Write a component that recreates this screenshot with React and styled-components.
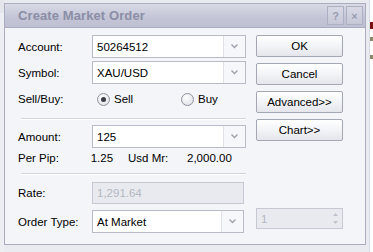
import React from "react";
import styled, { createGlobalStyle } from "styled-components";

const Global = createGlobalStyle`
  html, body {
    margin: 0;
    padding: 0;
    background: #e9ebf0;
    font-family: "Liberation Sans", Arial, sans-serif;
    font-size: 11.5px;
    color: #000;
  }
`;

const Page = styled.div`
  display: flex;
  width: 373px;
  height: 252px;
  overflow: hidden;
`;

const LeftEdge = styled.div`
  width: 4px;
  background: #eceef2;
  border-top: 13px solid #e4e6ec;
`;

const Dialog = styled.div`
  margin-top: 3px;
  width: 360px;
  height: 240px;
  border: 1px solid #a9adbf;
  background: #f4f5f9;
  display: flex;
  flex-direction: column;
`;

const TitleBar = styled.div`
  height: 23px;
  display: flex;
  align-items: center;
  padding: 0 2px 0 13px;
  background: linear-gradient(#d9dae6, #c3c5d6 60%, #bfc1d3);
  border-bottom: 1px solid #a9adbf;
`;

const Title = styled.div`
  flex: 1;
  font-weight: bold;
  font-size: 13px;
  color: #8b8ea6;
  letter-spacing: 0.1px;
`;

const TitleButton = styled.div`
  width: 15px;
  height: 17px;
  margin-left: 2px;
  border: 1px solid #adb0c2;
  background: linear-gradient(#d8d9e5, #c6c8d8);
  color: #9a9db2;
  font-weight: bold;
  font-size: 11px;
  display: flex;
  align-items: center;
  justify-content: center;
`;

const Body = styled.div`
  flex: 1;
  display: flex;
  padding: 7px 0 0 12px;
`;

const FormColumn = styled.div`
  width: 229px;
  display: flex;
  flex-direction: column;
`;

const Row = styled.div`
  display: flex;
  align-items: center;
  height: ${(p) => p.$h || 23}px;
  margin-bottom: ${(p) => p.$mb || 0}px;
`;

const Label = styled.div`
  width: 74px;
  padding-left: 1px;
`;

const Field = styled.div`
  width: ${(p) => p.$w || 154}px;
  height: ${(p) => p.$h || 23}px;
  box-sizing: border-box;
  border: 1px solid ${(p) => (p.$disabled ? "#c6c9d3" : "#b7bbc8")};
  background: ${(p) => (p.$disabled ? "#e9eaef" : "#fff")};
  color: ${(p) => (p.$disabled ? "#b3b6c2" : "#000")};
  display: flex;
  align-items: center;
`;

const FieldText = styled.div`
  flex: 1;
  padding-left: 4px;
`;

const DropButton = styled.div`
  width: 21px;
  height: 100%;
  border-left: 1px solid #dfe1e8;
  background: #f6f7fa;
  display: flex;
  align-items: center;
  justify-content: center;
`;

const SpinButton = styled.div`
  width: 14px;
  height: 100%;
  display: flex;
  flex-direction: column;
  align-items: center;
  justify-content: center;
  gap: 5px;
`;

const Radio = styled.div`
  width: 11px;
  height: 11px;
  border-radius: 50%;
  border: 1px solid #8e93a0;
  background: radial-gradient(circle at 40% 35%, #fff, #d9dbe2);
  display: flex;
  align-items: center;
  justify-content: center;
  margin-right: 4px;
  &::after {
    content: "";
    width: 5px;
    height: 5px;
    border-radius: 50%;
    background: ${(p) => (p.$on ? "#3a3d46" : "transparent")};
  }
`;

const RadioItem = styled.div`
  display: flex;
  align-items: center;
  width: ${(p) => p.$w}px;
  padding-left: 5px;
`;

const Separator = styled.div`
  height: 1px;
  background: #d2d5dd;
  border-bottom: 1px solid #fff;
  margin: ${(p) => p.$m || "0"};
`;

const Stat = styled.div`
  width: ${(p) => p.$w}px;
`;

const ButtonColumn = styled.div`
  width: 87px;
  margin-left: 10px;
  display: flex;
  flex-direction: column;
  gap: 5px;
`;

const Button = styled.div`
  height: 22px;
  box-sizing: border-box;
  border: 1px solid #a3a7b4;
  border-radius: 2px;
  background: linear-gradient(#ffffff, #f3f4f7 50%, #e4e6ec);
  display: flex;
  align-items: center;
  justify-content: center;
  margin-bottom: ${(p) => p.$mb || 0}px;
`;

const Spinner = styled(Field)`
  margin-top: auto;
  margin-bottom: 15px;
`;

const Backdrop = styled.div`
  flex: 1;
  margin-left: 3px;
  background: #fff;
  border-left: 1px solid #d9dce4;
  display: flex;
  flex-direction: column;
`;

const BackMark = styled.div`
  height: ${(p) => p.$h}px;
  margin-top: ${(p) => p.$mt}px;
  width: 3px;
  background: ${(p) => p.$c};
`;

const Arrow = () => (
  <svg width="7" height="5" viewBox="0 0 7 5">
    <path d="M0.5 0.5 L3.5 3.5 L6.5 0.5" fill="none" stroke="#9da1ad" strokeWidth="1.4" />
  </svg>
);

const SpinArrow = ({ up }) => (
  <svg width="5" height="3" viewBox="0 0 5 3">
    <path d={up ? "M0 3 L2.5 0 L5 3 Z" : "M0 0 L2.5 3 L5 0 Z"} fill="#c0c3cc" />
  </svg>
);

function Combo({ value, width }) {
  return (
    <Field $w={width}>
      <FieldText>{value}</FieldText>
      <DropButton>
        <Arrow />
      </DropButton>
    </Field>
  );
}

export default function App() {
  return (
    <Page>
      <Global />
      <LeftEdge />
      <Dialog>
        <TitleBar>
          <Title>Create Market Order</Title>
          <TitleButton>?</TitleButton>
          <TitleButton>×</TitleButton>
        </TitleBar>
        <Body>
          <FormColumn>
            <Row $mb={3}>
              <Label>Account:</Label>
              <Combo value="50264512" />
            </Row>
            <Row $mb={2}>
              <Label>Symbol:</Label>
              <Combo value="XAU/USD" />
            </Row>
            <Row $h={26}>
              <Label>Sell/Buy:</Label>
              <RadioItem $w={79}>
                <Radio $on />
                Sell
              </RadioItem>
              <RadioItem $w={60}>
                <Radio />
                Buy
              </RadioItem>
            </Row>
            <Separator $m="6px 0 5px 4px" />
            <Row $mb={1}>
              <Label>Amount:</Label>
              <Combo value="125" />
            </Row>
            <Row $h={18}>
              <Label>Per Pip:</Label>
              <Stat $w={38}>1.25</Stat>
              <Stat $w={60}>Usd Mr:</Stat>
              <Stat $w={60}>2,000.00</Stat>
            </Row>
            <Separator $m="6px 0 7px 4px" />
            <Row $h={22} $mb={6}>
              <Label>Rate:</Label>
              <Field $disabled $w={152} $h={22}>
                <FieldText>1,291.64</FieldText>
              </Field>
            </Row>
            <Row>
              <Label>Order Type:</Label>
              <Combo value="At Market" width={152} />
            </Row>
          </FormColumn>
          <ButtonColumn>
            <Button $mb={1}>OK</Button>
            <Button $mb={1}>Cancel</Button>
            <Button $mb={1}>Advanced&gt;&gt;</Button>
            <Button>Chart&gt;&gt;</Button>
            <Spinner $disabled $w={87} $h={21}>
              <FieldText>1</FieldText>
              <SpinButton>
                <SpinArrow up />
                <SpinArrow />
              </SpinButton>
            </Spinner>
          </ButtonColumn>
        </Body>
      </Dialog>
      <Backdrop>
        <BackMark $mt={22} $h={7} $c="#7a1010" />
        <BackMark $mt={8} $h={4} $c="#8a8a6a" />
        <BackMark $mt={14} $h={4} $c="#8a8a6a" />
      </Backdrop>
    </Page>
  );
}
